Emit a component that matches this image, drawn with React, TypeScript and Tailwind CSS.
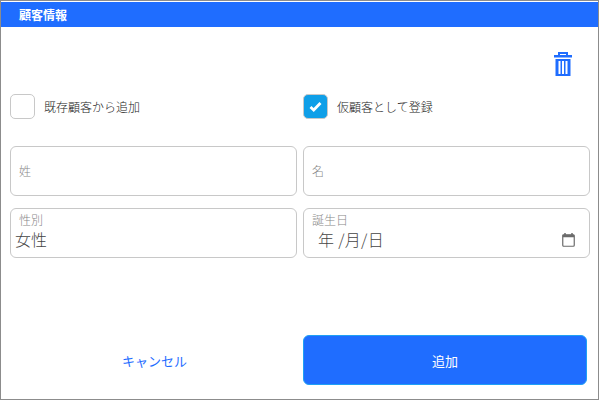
import React from 'react';

const Trash = () => (
  <svg width="18" height="24" viewBox="0 0 18 24" className="block">
    <path d="M5 3V1h8v2" fill="none" stroke="#1f6dff" strokeWidth="2" />
    <rect x="0" y="3" width="18" height="2.5" fill="#1f6dff" />
    <path d="M1.5 7h15v17h-15z" fill="#1f6dff" />
    <rect x="4.5" y="9" width="2" height="13" fill="#fff" />
    <rect x="8" y="9" width="2" height="13" fill="#fff" />
    <rect x="11.5" y="9" width="2" height="13" fill="#fff" />
  </svg>
);

const Calendar = () => (
  <svg width="13" height="14" viewBox="0 0 13 14" className="mt-px block">
    <path d="M3 0v2M10 0v2" stroke="#6b6b6b" strokeWidth="1.5" />
    <rect x="0.75" y="1.75" width="11.5" height="11.5" rx="1" fill="none" stroke="#6b6b6b" strokeWidth="1.2" />
    <rect x="0.75" y="1.75" width="11.5" height="2.5" fill="#6b6b6b" />
  </svg>
);

type CheckProps = {
  label: string;
  checked?: boolean;
};

const Check = ({ label, checked }: CheckProps) => (
  <div className="flex w-[287px] items-center gap-[9px]">
    <div
      className={`flex h-[25px] w-[25px] items-center justify-center rounded-[5px] border border-[#c8c8c8] ${
        checked ? 'bg-[#0f9fe8]' : 'bg-white'
      }`}
    >
      {checked && (
        <svg width="13" height="11" viewBox="0 0 13 11">
          <path d="M1.5 6l3.2 3L11.5 2" fill="none" stroke="#fff" strokeWidth="2.8" />
        </svg>
      )}
    </div>
    <span className="text-[12px] leading-[25px] font-light text-[#222]">{label}</span>
  </div>
);

const Empty = ({ label }: { label: string }) => (
  <div className="flex h-[50px] w-[287px] items-center rounded-[6px] border border-[#c8c8c8] pl-[8px]">
    <span className="text-[12px] font-light text-[#888]">{label}</span>
  </div>
);

const Filled = ({ label, children }: { label: string; children: React.ReactNode }) => (
  <div className="flex h-[50px] w-[287px] flex-col rounded-[6px] border border-[#c8c8c8] pl-[8px] pr-[14px] pt-[4px]">
    <span className="text-[12px] leading-[14px] font-light text-[#888]">{label}</span>
    {children}
  </div>
);

export default function App() {
  return (
    <div className="flex h-[400px] w-[599px] flex-col border border-[#8c8c8c] bg-white font-['Noto_Sans_CJK_JP','Noto_Sans',sans-serif]">
      <div className="mt-px flex h-[25px] items-center bg-[#1f6dff] pl-[18px] text-[12px] font-bold text-white">
        顧客情報
      </div>
      <div className="flex justify-end pr-[26px] pt-[25px]">
        <Trash />
      </div>
      <div className="mt-[18px] flex gap-[6px] pl-[9px]">
        <Check label="既存顧客から追加" />
        <Check label="仮顧客として登録" checked />
      </div>
      <div className="mt-[27px] flex gap-[6px] pl-[9px]">
        <Empty label="姓" />
        <Empty label="名" />
      </div>
      <div className="mt-[12px] flex gap-[6px] pl-[9px]">
        <Filled label="性別">
          <span className="-ml-[4px] text-[16px] leading-[24px] font-light text-[#444]">女性</span>
        </Filled>
        <Filled label="誕生日">
          <div className="flex items-center justify-between">
            <span className="ml-[6px] text-[16px] leading-[24px] font-light tracking-[0.3px] text-[#444]">年 /月/日</span>
            <Calendar />
          </div>
        </Filled>
      </div>
      <div className="mt-[77px] flex gap-[6px] pl-[9px]">
        <button className="h-[50px] w-[287px] pl-[2px] pt-[2px] text-[13px] text-[#1f6dff]">キャンセル</button>
        <button className="h-[50px] w-[284px] rounded-[6px] border border-[#1fa0f5] bg-[#1f6dff] pt-[2px] text-[13px] text-white">
          追加
        </button>
      </div>
    </div>
  );
}
